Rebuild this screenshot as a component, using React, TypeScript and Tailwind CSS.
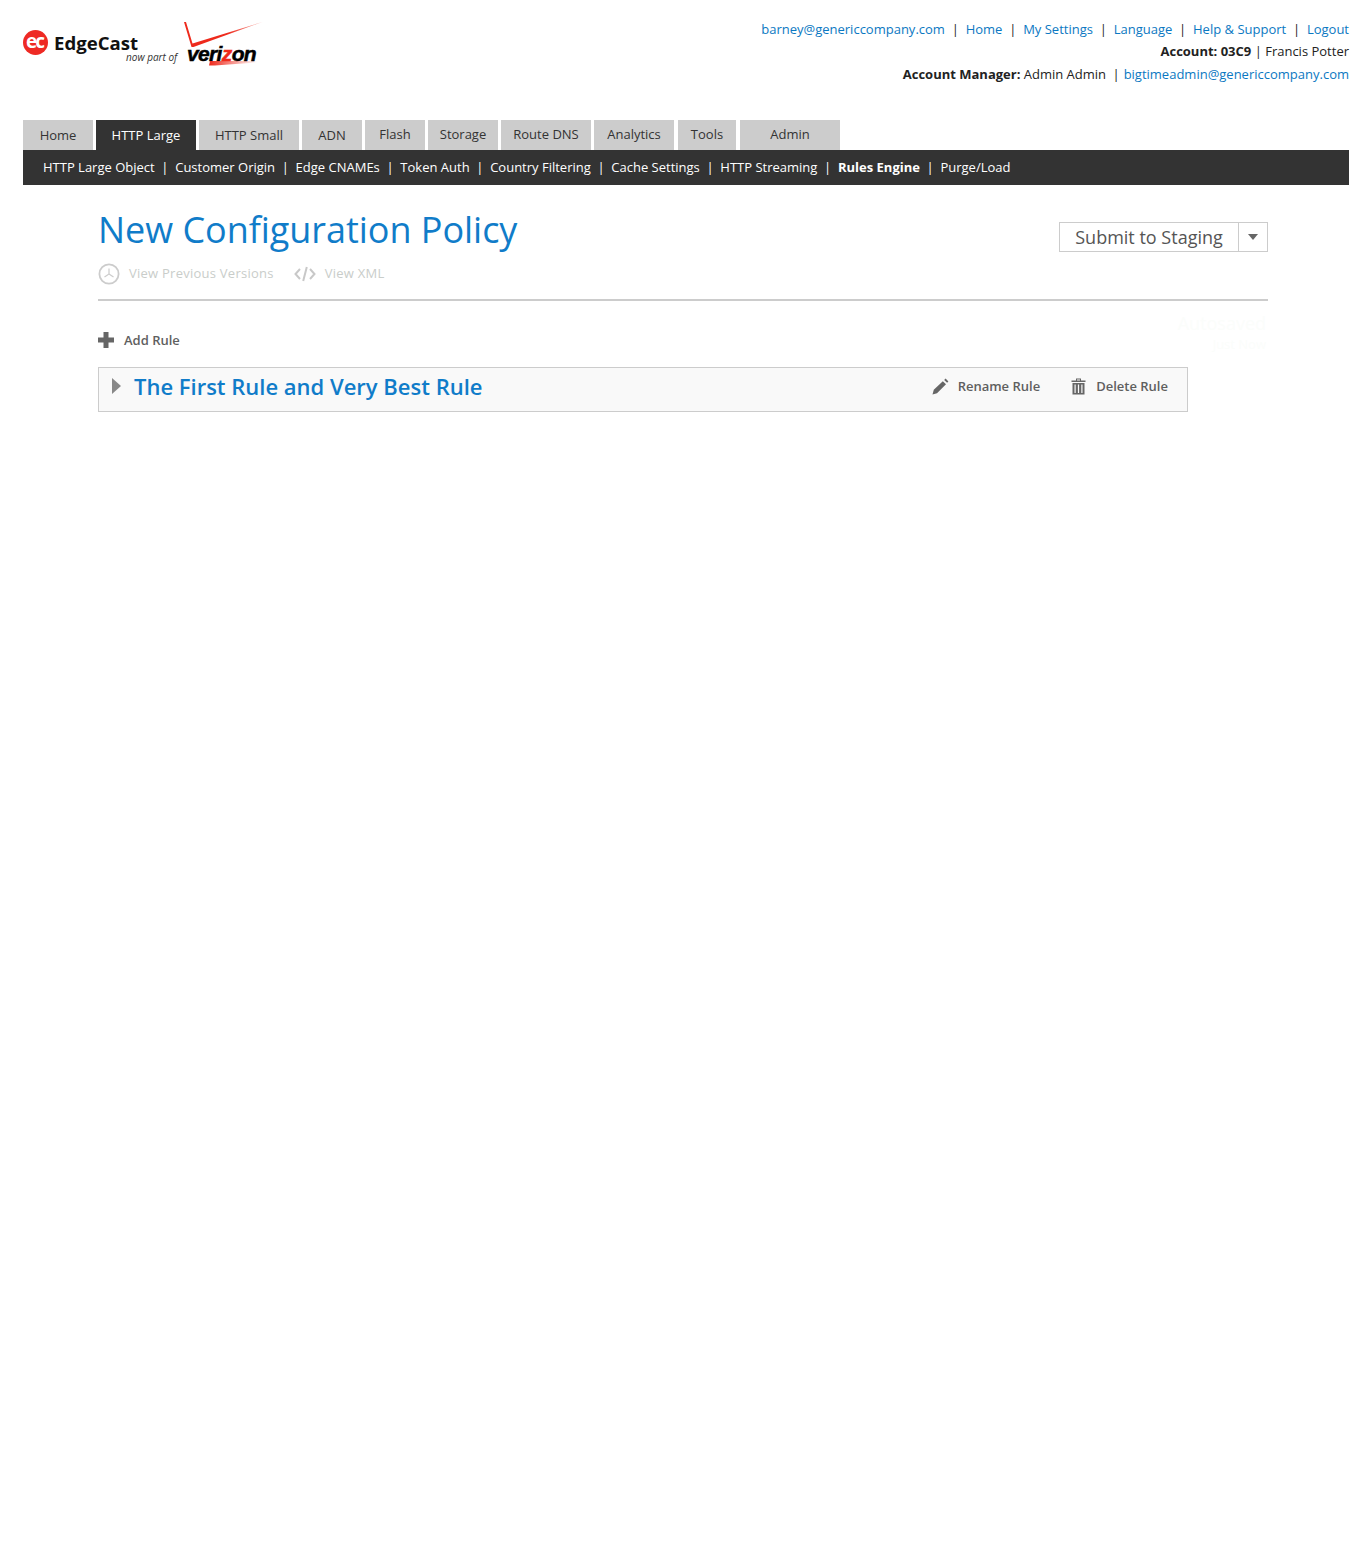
const topLinks = ['barney@genericcompany.com', 'Home', 'My Settings', 'Language', 'Help & Support', 'Logout'];

const tabs = [
  { label: 'Home', cls: 'w-[70px] pt-[1px]' },
  { label: 'HTTP Large', cls: 'w-[100px] pt-[1px]', active: true },
  { label: 'HTTP Small', cls: 'w-[100px] pt-[1px]' },
  { label: 'ADN', cls: 'w-[60px] pt-[1px]' },
  { label: 'Flash', cls: 'w-[60px]' },
  { label: 'Storage', cls: 'w-[70px]' },
  { label: 'Route DNS', cls: 'w-[90px]' },
  { label: 'Analytics', cls: 'w-[80px]' },
  { label: 'Tools', cls: 'ml-[1px] w-[58px]' },
  { label: 'Admin', cls: 'ml-[1px] w-[100px]' },
];

const subLinks = [
  'HTTP Large Object',
  'Customer Origin',
  'Edge CNAMEs',
  'Token Auth',
  'Country Filtering',
  'Cache Settings',
  'HTTP Streaming',
  'Rules Engine',
  'Purge/Load',
];

function Logo() {
  return (
    <div className="relative h-[60px] w-[250px]">
      <div className="absolute left-0 top-[10px] flex h-[25px] w-[25px] items-center justify-center rounded-full bg-[#ee2a24] text-[19px] font-bold leading-none tracking-[-2px] text-white">
        <span className="-mt-[3px] -ml-[2px]">ec</span>
      </div>
      <div className="absolute left-[31px] top-[10px] text-[18.6px] font-bold leading-[26px] text-[#111]">EdgeCast</div>
      <div className="absolute left-[103px] top-[30px] text-[10px] italic leading-[14px] text-[#333]">now part of</div>
      <svg className="absolute left-[160px] top-[1px]" width="80" height="30" viewBox="0 0 80 30">
        <defs>
          <linearGradient id="check" x1="0" x2="1" y1="0" y2="0">
            <stop offset="0.1" stopColor="#ee2a1c" />
            <stop offset="0.55" stopColor="#ee2a1c" />
            <stop offset="1" stopColor="#ee2a1c" stopOpacity="0.35" />
          </linearGradient>
        </defs>
        <path d="M1 1 L8.5 26 L10.5 26 L79.5 1 L9.5 22.5 L3 1 Z" fill="url(#check)" />
      </svg>
      <div className="absolute left-[164px] top-[21px] font-['Liberation_Sans',sans-serif] text-[21px] font-bold italic leading-[26px] tracking-[-0.65px] text-black [-webkit-text-stroke:0.5px_black]">
        veri<span className="text-[#ee2a1c] [-webkit-text-stroke:0.5px_#ee2a1c]">z</span>on
      </div>
      <svg className="absolute left-[186px] top-[41px]" width="50" height="5" viewBox="0 0 50 5">
        <defs>
          <linearGradient id="swoosh" x1="0" x2="1" y1="0" y2="0">
            <stop offset="0" stopColor="#ee2a1c" />
            <stop offset="1" stopColor="#ee2a1c" stopOpacity="0" />
          </linearGradient>
        </defs>
        <path d="M1 0H48V1.5L6 4.5H0Z" fill="url(#swoosh)" />
      </svg>
    </div>
  );
}

function ClockIcon() {
  return (
    <svg width="22" height="22" viewBox="0 0 22 22" fill="none" stroke="#cccccc">
      <circle cx="11" cy="11" r="9.6" strokeWidth="1.8" />
      <path d="M11 5.5V11L6.5 14M11 11l4.5 3" strokeWidth="1.2" />
    </svg>
  );
}

function CodeIcon() {
  return (
    <svg width="22" height="16" viewBox="0 0 22 16" fill="none" stroke="#c8c8c8" strokeWidth="2">
      <path d="M6 3L1.5 8L6 13M16 3l4.5 5L16 13M12.8 1L9.2 15" />
    </svg>
  );
}

function PlusIcon() {
  return (
    <svg className="mb-[2px]" width="16" height="16" viewBox="0 0 16 16" fill="#666">
      <path d="M5.5 0H10.5V5.5H16V10.5H10.5V16H5.5V10.5H0V5.5H5.5Z" />
    </svg>
  );
}

function PencilIcon() {
  return (
    <svg width="17" height="17" viewBox="0 0 17 17" fill="#666">
      <path d="M0.5 16.5L1.8 11.8L10.8 3.2L14 6.3L5 15.2Z" />
      <path d="M12.2 1.9L13.6 0.6L16.4 3.4L15.1 4.8Z" />
    </svg>
  );
}

function TrashIcon() {
  return (
    <svg width="15" height="17" viewBox="0 0 15 17" fill="#666">
      <path d="M0.5 2.5H5V0.5H10V2.5H14.5V4H0.5ZM6 1.5V2.5H9V1.5Z" fillRule="evenodd" />
      <path d="M1.5 5H13.5V16.5H1.5ZM3.5 6.5V15H4.7V6.5ZM6.9 6.5V15H8.1V6.5ZM10.3 6.5V15H11.5V6.5Z" fillRule="evenodd" />
    </svg>
  );
}

export default function App() {
  return (
    <div className="min-h-[1560px] bg-white pl-[23px] pr-[17px] font-['Open_Sans',sans-serif]">
      <header className="flex h-[120px] justify-between pt-[20px]">
        <Logo />
        <div className="-mt-[2px] flex flex-col items-end text-[13px] text-[#222]">
          <div className="flex leading-[22px]">
            {topLinks.map((link, i) => (
              <span key={link}>
                {i > 0 && <span className="mx-[6.8px] text-[#222]">|</span>}
                <a className="text-[#0b78c2]">{link}</a>
              </span>
            ))}
          </div>
          <div className="leading-[22px]">
            <b>Account: 03C9</b> | Francis Potter
          </div>
          <div className="mt-[1px] leading-[23px]">
            <b>Account Manager:</b> Admin Admin <span className="ml-[3px] mr-[4px]">|</span>
            <a className="text-[#0b78c2]">bigtimeadmin@genericcompany.com</a>
          </div>
        </div>
      </header>

      <nav className="flex h-[30px] gap-[3px]">
        {tabs.map((tab) => (
          <div
            key={tab.label}
            className={`flex items-center justify-center text-[13px] ${tab.cls} ${
              tab.active ? 'bg-[#333333] text-white' : 'bg-[#cccccc] text-[#333]'
            }`}
          >
            {tab.label}
          </div>
        ))}
      </nav>

      <div className="flex h-[35px] items-center bg-[#333333] pl-[20px] text-[13px] text-white">
        {subLinks.map((link, i) => (
          <span key={link}>
            {i > 0 && <span className="mx-[6.7px]">|</span>}
            <span className={link === 'Rules Engine' ? 'font-bold' : ''}>{link}</span>
          </span>
        ))}
      </div>

      <main className="ml-[75px] w-[1170px]">
        <div className="flex h-[116px] justify-between border-b-2 border-[#cccccc]">
          <div>
            <h1 className="mt-[21px] text-[36px] leading-[48px] tracking-[-0.04px] text-[#107cc9]">
              New Configuration Policy
            </h1>
            <div className="mt-[9px] flex items-center text-[13px] tracking-[0.25px] text-[#c9cdca]">
              <ClockIcon />
              <span className="ml-[9px]">View Previous Versions</span>
              <span className="ml-[20px] flex items-center">
                <CodeIcon />
                <span className="ml-[9px]">View XML</span>
              </span>
            </div>
          </div>
          <div className="mt-[37px] flex h-[30px] border border-[#cccccc] text-[18px] text-[#555]">
            <div className="flex w-[179px] items-center justify-center border-r border-[#cccccc]">Submit to Staging</div>
            <div className="flex w-[28px] items-center justify-center">
              <div className="h-0 w-0 border-x-[5.5px] border-t-[6px] border-x-transparent border-t-[#666]" />
            </div>
          </div>
        </div>

        <div className="relative">
          <div className="absolute right-[2px] top-[12px] text-right text-[13px] leading-[21px] text-[#fbfdfb]">
            <div className="text-[18px]">Autosaved</div>
            <div>Just Now</div>
          </div>
          <div className="flex h-[66px] items-center pt-[13px] text-[13px] font-semibold text-[#5f5f5f]">
            <PlusIcon />
            <span className="ml-[10px]">Add Rule</span>
          </div>
          <div className="flex h-[45px] w-[1090px] items-start justify-between border border-[#cccccc] bg-[#f9f9f9]">
            <div className="flex items-center pl-[13px] pt-[2px]">
              <div className="h-0 w-0 border-y-[8px] border-l-[9px] border-y-transparent border-l-[#888] -mt-[1px]" />
              <span className="ml-[13px] text-[22px] font-semibold leading-[32px] text-[#107cc9]">
                The First Rule and Very Best Rule
              </span>
            </div>
            <div className="flex items-center pr-[19px] pt-[9px] text-[13px] font-semibold text-[#5f5f5f]">
              <PencilIcon />
              <span className="ml-[9px]">Rename Rule</span>
              <span className="ml-[31px] flex items-center">
                <TrashIcon />
                <span className="ml-[10px]">Delete Rule</span>
              </span>
            </div>
          </div>
        </div>
      </main>
    </div>
  );
}
